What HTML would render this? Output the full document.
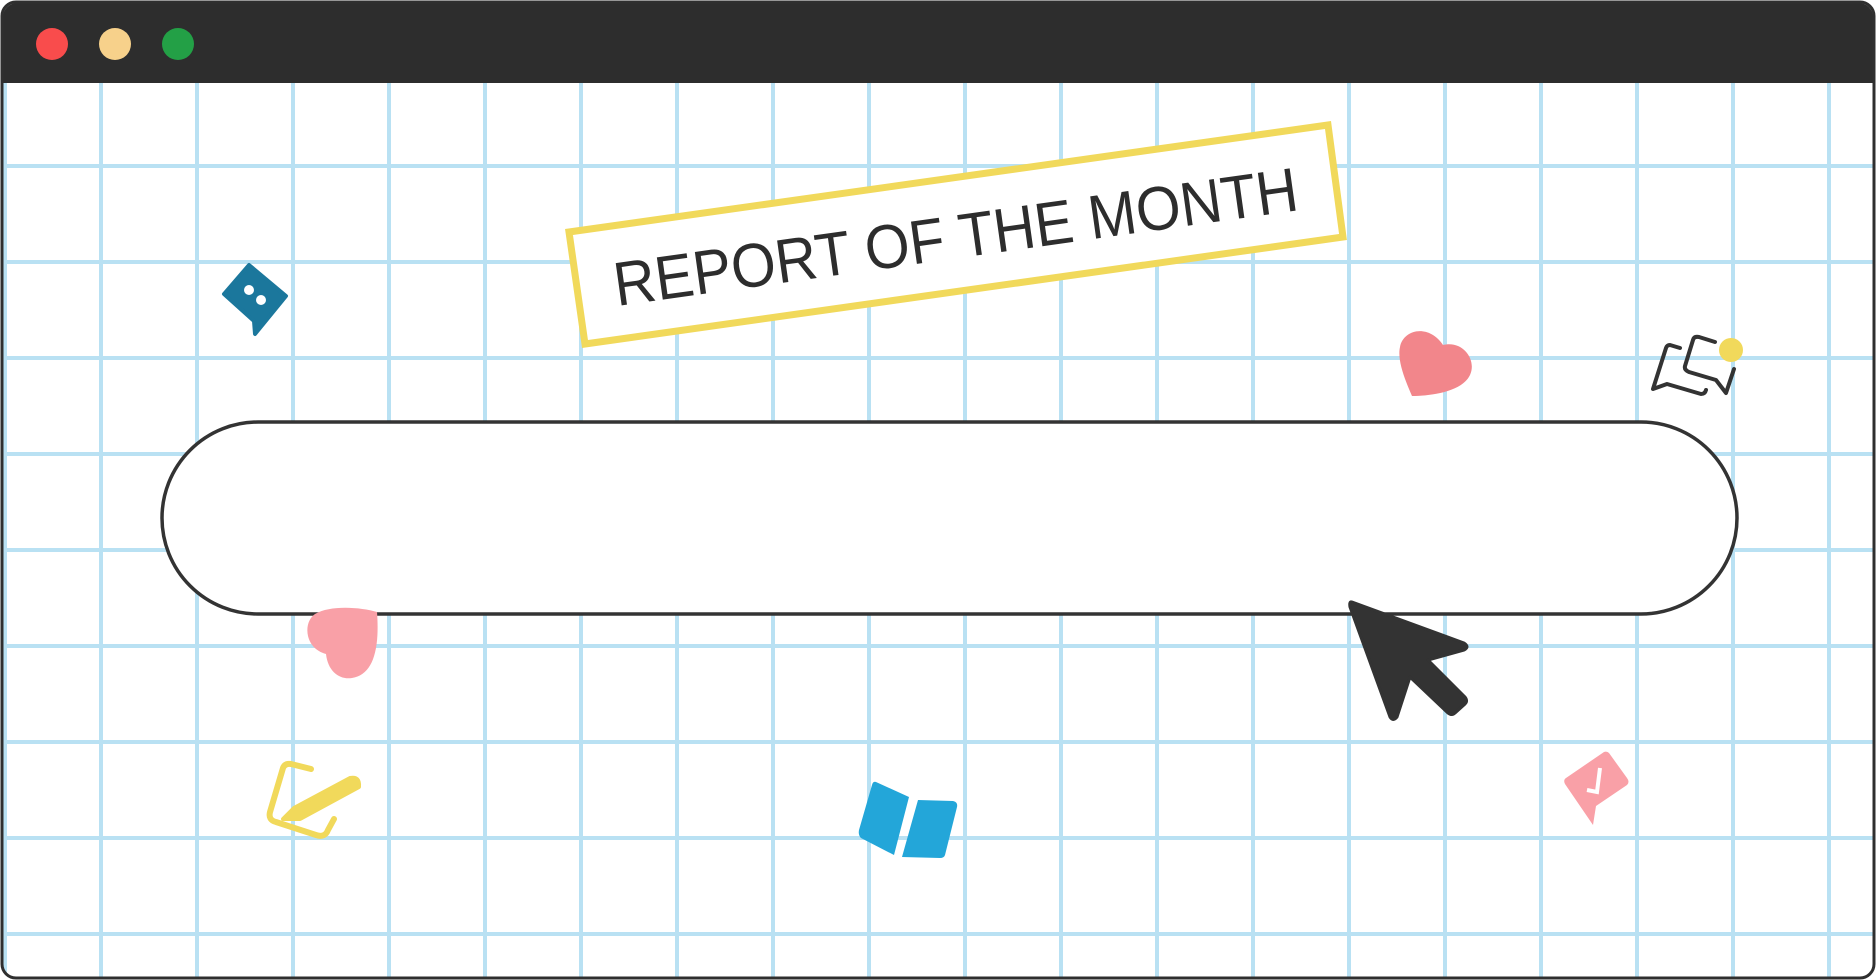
<!DOCTYPE html>
<html><head><meta charset="utf-8"><style>
html,body{margin:0;padding:0;background:#fff;}
svg{display:block}
</style></head><body>
<svg width="1876" height="980" viewBox="0 0 1876 980" xmlns="http://www.w3.org/2000/svg">
<defs>
<pattern id="g" x="99" y="164" width="96" height="96" patternUnits="userSpaceOnUse">
<rect x="0" y="0" width="4" height="96" fill="#b9e1f3"/>
<rect x="0" y="0" width="96" height="4" fill="#b9e1f3"/>
</pattern>
<clipPath id="win"><rect x="3" y="3" width="1870" height="974" rx="14"/></clipPath>
</defs>
<rect width="1876" height="980" fill="#fff"/>
<g clip-path="url(#win)">
<rect width="1876" height="980" fill="url(#g)"/>
<rect x="0" y="0" width="1876" height="83" fill="#2d2d2d"/>
</g>
<rect x="2" y="2" width="1872" height="976" rx="14" fill="none" stroke="#2f2f2f" stroke-width="3"/>
<circle cx="52" cy="44" r="16" fill="#f94c4c"/>
<circle cx="115" cy="44" r="16" fill="#f7d18b"/>
<circle cx="178" cy="44" r="16" fill="#23a046"/>

<!-- pill -->
<rect x="162" y="422" width="1575" height="192" rx="96" fill="#fff" stroke="#333" stroke-width="3.5"/>

<!-- label -->
<polygon points="569,232 1328,125 1343,237 585,344" fill="#fff" stroke="#f1d95b" stroke-width="7"/>
<text x="0" y="0" transform="translate(617,306) rotate(-8)" font-family="Liberation Sans, sans-serif" font-size="62" fill="#2d2d2d" textLength="690" lengthAdjust="spacingAndGlyphs">REPORT OF THE MONTH</text>

<!-- blue chat -->
<path d="M249,265 L286,296 L255,334 L254,321 L224,294 Z" fill="#1b779c" stroke="#1b779c" stroke-width="4" stroke-linejoin="round"/>
<circle cx="249" cy="290" r="5" fill="#fff"/>
<circle cx="261" cy="300" r="5" fill="#fff"/>

<!-- pink heart bottom -->
<path d="M377,612 C360,607 330,605 315,614 C303,622 304,648 326,654 C328,672 340,680 352,678 C372,675 380,652 377,612 Z" fill="#f9a0a7"/>

<!-- yellow pencil -->
<path d="M311,769 L291,764 Q285,763 283,768 L270,812 Q268,820 276,822 L316,835 Q325,838 328,830 L334,819" fill="none" stroke="#f1d95b" stroke-width="6" stroke-linecap="round" stroke-linejoin="round"/>
<path d="M294,808 L350,778 Q360,776 359,787 L300,819 L283,819 Z" fill="#f1d95b" stroke="#f1d95b" stroke-width="4" stroke-linejoin="round"/>

<!-- blue book -->
<path d="M876,782 L909,797 L894,855 L861,838 Q858,835 859,830 L872,785 Q873,781 876,782 Z" fill="#23a6d9"/>
<path d="M918,800 L953,801 Q958,802 957,807 L945,855 Q944,858 940,858 L902,857 Z" fill="#23a6d9"/>

<!-- pink chat check -->
<path d="M1604,752 Q1607,751 1609,753 L1627,778 Q1630,782 1627,785 L1596,806 L1593,825 L1565,784 Q1563,780 1566,778 Z" fill="#f9a0a7"/>
<path d="M1600,768 L1597,792 L1587,790" fill="none" stroke="#fff" stroke-width="4"/>

<!-- pink heart top -->
<path d="M1412,396 C1405,380 1397,360 1400,347 C1403,330 1428,323 1443,345 C1463,340 1477,360 1470,375 C1462,392 1430,396 1412,396 Z" fill="#f2868b"/>

<!-- chat outline -->
<path d="M1680,348 L1670,345 Q1667,345 1666,348 L1653,389 L1667,384 L1701,394 Q1705,394 1706,390" fill="none" stroke="#333" stroke-width="4" stroke-linecap="round" stroke-linejoin="round"/>
<path d="M1715,342 L1699,337 Q1694,336 1693,340 L1685,366 Q1684,370 1689,372 L1716,380 L1726,393 L1734,369" fill="none" stroke="#333" stroke-width="4" stroke-linecap="round" stroke-linejoin="round"/>
<circle cx="1731" cy="350" r="12" fill="#f1d95b"/>

<!-- cursor -->
<path d="M1352,602 L1464,643 Q1470,647 1464,650 L1428,660 L1465,697 Q1468,701 1465,704 L1455,713 Q1452,716 1448,713 L1410,677 L1397,717 Q1393,722 1390,717 L1350,607 Q1349,601 1352,602 Z" fill="#333" stroke="#333" stroke-width="3" stroke-linejoin="round"/>
</svg>
</body></html>
